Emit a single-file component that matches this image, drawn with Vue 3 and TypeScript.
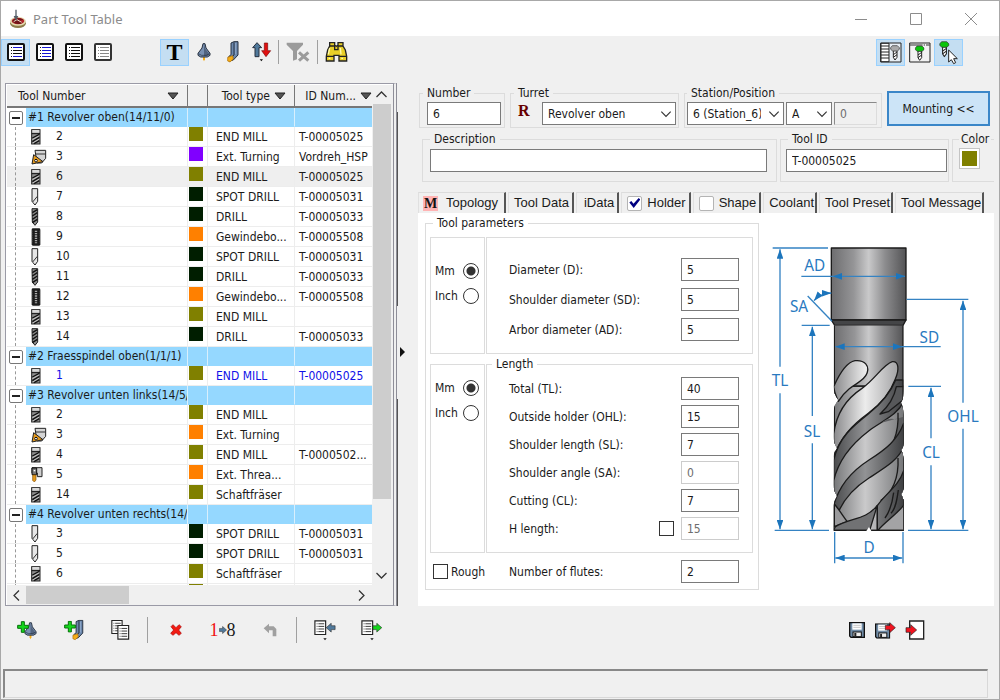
<script setup lang="ts">
import { computed, ref } from 'vue'

type IconId = 'endmill' | 'turning' | 'spot' | 'drill' | 'tap' | 'thread'

interface Tool {
  no: string
  icon: IconId
  color: string
  type: string
  id: string
  state?: 'selected' | 'current'
}

interface Group {
  label: string
  tools: Tool[]
}

const OLIVE = '#808000'
const DARK = '#001e00'
const ORANGE = '#ff8000'
const PURPLE = '#8000ff'

const groups = ref<Group[]>([
  {
    label: '#1 Revolver oben(14/11/0)',
    tools: [
      { no: '2', icon: 'endmill', color: OLIVE, type: 'END MILL', id: 'T-00005025' },
      { no: '3', icon: 'turning', color: PURPLE, type: 'Ext. Turning', id: 'Vordreh_HSP' },
      { no: '6', icon: 'endmill', color: OLIVE, type: 'END MILL', id: 'T-00005025', state: 'selected' },
      { no: '7', icon: 'spot', color: DARK, type: 'SPOT DRILL', id: 'T-00005031' },
      { no: '8', icon: 'drill', color: DARK, type: 'DRILL', id: 'T-00005033' },
      { no: '9', icon: 'tap', color: ORANGE, type: 'Gewindebo...', id: 'T-00005508' },
      { no: '10', icon: 'spot', color: DARK, type: 'SPOT DRILL', id: 'T-00005031' },
      { no: '11', icon: 'drill', color: DARK, type: 'DRILL', id: 'T-00005033' },
      { no: '12', icon: 'tap', color: ORANGE, type: 'Gewindebo...', id: 'T-00005508' },
      { no: '13', icon: 'endmill', color: OLIVE, type: 'END MILL', id: '' },
      { no: '14', icon: 'drill', color: DARK, type: 'DRILL', id: 'T-00005033' },
    ],
  },
  {
    label: '#2 Fraesspindel oben(1/1/1)',
    tools: [{ no: '1', icon: 'endmill', color: OLIVE, type: 'END MILL', id: 'T-00005025', state: 'current' }],
  },
  {
    label: '#3 Revolver unten links(14/5/',
    tools: [
      { no: '2', icon: 'endmill', color: OLIVE, type: 'END MILL', id: '' },
      { no: '3', icon: 'turning', color: ORANGE, type: 'Ext. Turning', id: '' },
      { no: '4', icon: 'endmill', color: OLIVE, type: 'END MILL', id: 'T-0000502...' },
      { no: '5', icon: 'thread', color: ORANGE, type: 'Ext. Threa...', id: '' },
      { no: '14', icon: 'endmill', color: OLIVE, type: 'Schaftfräser', id: '' },
    ],
  },
  {
    label: '#4 Revolver unten rechts(14/5',
    tools: [
      { no: '3', icon: 'spot', color: DARK, type: 'SPOT DRILL', id: 'T-00005031' },
      { no: '5', icon: 'spot', color: DARK, type: 'SPOT DRILL', id: 'T-00005031' },
      { no: '6', icon: 'endmill', color: OLIVE, type: 'Schaftfräser', id: '' },
      { no: '', icon: 'endmill', color: OLIVE, type: '', id: '' },
    ],
  },
])

const listViews = ['mixed', 'blue', 'black', 'gray'] as const
const activeView = ref<(typeof listViews)[number]>('mixed')

const form = ref({
  number: '6',
  turret: 'Revolver oben',
  station: '6 (Station_6)',
  position: 'A',
  offset: '0',
  description: '',
  toolId: 'T-00005025',
  color: OLIVE,
  holder: true,
  shape: false,
  diameterUnit: 'Mm',
  lengthUnit: 'Mm',
  rough: false,
  flutes: '2',
  hLength: false,
})

const diameters = ref([
  { key: 'd', label: 'Diameter (D):', value: '5' },
  { key: 'sd', label: 'Shoulder diameter (SD):', value: '5' },
  { key: 'ad', label: 'Arbor diameter (AD):', value: '5' },
])

const lengths = ref([
  { key: 'tl', label: 'Total (TL):', value: '40', disabled: false },
  { key: 'ohl', label: 'Outside holder (OHL):', value: '15', disabled: false },
  { key: 'sl', label: 'Shoulder length (SL):', value: '7', disabled: false },
  { key: 'sa', label: 'Shoulder angle (SA):', value: '0', disabled: true },
  { key: 'cl', label: 'Cutting (CL):', value: '7', disabled: false },
  { key: 'hl', label: 'H length:', value: '15', disabled: true },
])

const units = ['Mm', 'Inch']
const swatchStyle = computed(() => ({ backgroundColor: form.value.color }))
</script>

<template>
  <svg class="defs" aria-hidden="true">
    <symbol id="endmill" viewBox="0 0 30 48">
      <rect x="2" y="2" width="25" height="43" fill="#8f8f8f" stroke="#222" stroke-width="3" />
      <rect x="4" y="3" width="21" height="8" fill="#d8d8d8" />
      <path d="M2 14H27" stroke="#111" stroke-width="3" />
      <path d="M4 27L25 16M4 38L25 25M9 44L25 35" stroke="#111" stroke-width="4" />
      <path d="M4 32L25 20M5 42L25 30" stroke="#ddd" stroke-width="2" />
    </symbol>
    <symbol id="turning" viewBox="0 0 48 48">
      <path d="M12 4H44V28L32 42H18Z" fill="#d4d4d4" stroke="#222" stroke-width="3" />
      <path d="M14 15H44" stroke="#333" stroke-width="3" />
      <path d="M8 17L36 38L3 45Z" fill="#e59a1c" stroke="#222" stroke-width="3" />
      <circle cx="15" cy="35" r="4" fill="#fff" stroke="#111" stroke-width="3" />
    </symbol>
    <symbol id="spot" viewBox="0 0 30 54">
      <path d="M3 2H20V40L12 51L6 44L3 40Z" fill="#e6e6e6" stroke="#222" stroke-width="3" />
      <path d="M5 42L19 25" stroke="#333" stroke-width="3" />
    </symbol>
    <symbol id="drill" viewBox="0 0 30 54">
      <path d="M3 2H20V42L12 52L4 42Z" fill="#8c8c8c" stroke="#222" stroke-width="3" />
      <path d="M4 14L19 5M4 24L19 14M4 34L19 24M4 44L19 34" stroke="#111" stroke-width="4" />
    </symbol>
    <symbol id="tap" viewBox="0 0 30 54">
      <rect x="2" y="1" width="26" height="52" rx="4" fill="#1c1c1c" />
      <path d="M15 8V46" stroke="#aaa" stroke-width="7" stroke-dasharray="4 3" />
      <path d="M4 8V46M26 8V46" stroke="#666" stroke-width="2" stroke-dasharray="3 3" />
    </symbol>
    <symbol id="thread" viewBox="0 0 36 48">
      <path d="M3 2H33V29H19V18H3Z" fill="#cfcfcf" stroke="#222" stroke-width="3" />
      <path d="M3 3H17V23H3Z" fill="#777" stroke="#111" stroke-width="3" />
      <path d="M8 11H13" stroke="#fff" stroke-width="4" />
      <path d="M5 24H15V39L10 45L5 40Z" fill="#e59a1c" stroke="#84510a" stroke-width="2" />
    </symbol>
    <symbol id="cone" viewBox="0 0 42 60">
      <path d="M18 40H24V52L21 58L18 52Z" fill="#f5ad19" />
      <path d="M18 5L24 5L27 18L39 34V40L31 45H11L3 40V34L15 18Z" fill="#7890b2" stroke="#26303f" stroke-width="3" />
      <path d="M21 6V42L31 43L37 37L25 20Z" fill="#52647f" />
      <path d="M4 35L14 40H28L38 35" fill="none" stroke="#26303f" stroke-width="2" />
    </symbol>
    <symbol id="holder" viewBox="0 0 42 66">
      <path d="M15 6L24 2H36V42L22 57L9 60L8 47L15 41Z" fill="#6c88ad" stroke="#252f3e" stroke-width="3" />
      <path d="M24 4V42L17 48" fill="none" stroke="#252f3e" stroke-width="3" />
      <path d="M29 6V40" stroke="#8fa8c8" stroke-width="3" />
      <path d="M5 49L20 44L22 54L12 63L5 60Z" fill="#f5ad19" stroke="#ab6b00" stroke-width="2" />
    </symbol>
    <symbol id="plus" viewBox="0 0 36 36">
      <path d="M13 2H22V13H34V22H22V34H13V22H2V13H13Z" fill="#14d61d" stroke="#08700c" stroke-width="3" />
    </symbol>
    <symbol id="sheet" viewBox="0 0 48 54">
      <path d="M3 3H40V50H3Z" fill="#fff" stroke="#222" stroke-width="4" />
      <path d="M9 13H12M9 22H12M9 31H12M9 40H12M15 13H35M15 22H35M15 31H35M15 40H35" stroke="#222" stroke-width="3" />
    </symbol>
    <symbol id="screw" viewBox="0 0 30 48">
      <path d="M10 18H21V38L15 46L10 38Z" fill="#fff" stroke="#222" stroke-width="3" />
      <path d="M10 30L21 22M10 38L21 30" stroke="#222" stroke-width="3" />
      <path d="M7 3H22L28 9V14L22 19H8L2 14V9Z" fill="currentColor" stroke="#333" stroke-width="2" />
    </symbol>
    <symbol id="floppy" viewBox="0 0 48 48">
      <path d="M2 2H46V46H6L2 42Z" fill="#6f8ba6" stroke="#111" stroke-width="4" />
      <rect x="10" y="4" width="28" height="19" fill="#fff" />
      <path d="M13 10H35M13 16H35" stroke="#aaa" stroke-width="2" />
      <rect x="12" y="30" width="25" height="14" fill="#eee" stroke="#111" stroke-width="3" />
      <rect x="16" y="33" width="6" height="10" fill="#222" />
    </symbol>
    <symbol id="chevron" viewBox="0 0 12 12">
      <path d="M2 4L6 8L10 4" fill="none" stroke="currentColor" stroke-width="1" />
    </symbol>
    <symbol id="arrow-right" viewBox="0 0 36 36">
      <path d="M2 11H16V2L34 18L16 34V25H2Z" fill="currentColor" stroke="#222" stroke-width="2" />
    </symbol>
    <symbol id="sort" viewBox="0 0 12 8">
      <path d="M1 1H11L6 7Z" fill="#555" stroke="#222" />
    </symbol>
  </svg>

  <div class="window">
    <header class="titlebar">
      <svg class="app-icon" viewBox="30 24 54 60" aria-hidden="true">
        <ellipse cx="57" cy="67" rx="24" ry="14" fill="#8d7c4a" />
        <ellipse cx="57" cy="61" rx="24" ry="13" fill="#e5dcb0" />
        <ellipse cx="57" cy="60" rx="19" ry="10" fill="#b3262b" />
        <path d="M40 60C46 49 66 50 73 56L60 59L71 65C62 71 46 70 40 60" fill="#711518" />
        <path d="M44 62L54 56L68 64" fill="none" stroke="#eee0c8" stroke-width="3" />
        <path d="M49 26H53V44L58 46L51 59L44 46L49 44Z" fill="#555f68" />
      </svg>
      <h1>Part Tool Table</h1>
      <div class="caption">
        <button type="button" aria-label="Minimize"><svg viewBox="0 0 14 14"><path d="M1 7.500H13" /></svg></button>
        <button type="button" aria-label="Maximize"><svg viewBox="0 0 14 14"><path d="M1.500 1.500H12.500V12.500H1.500Z" /></svg></button>
        <button type="button" aria-label="Close"><svg viewBox="0 0 14 14"><path d="M1 1L13 13M13 1L1 13" /></svg></button>
      </div>
    </header>

    <nav class="toolbar" aria-label="View">
      <button
        v-for="view in listViews"
        :key="view"
        type="button"
        class="tool"
        :class="{ on: view === activeView }"
        :aria-label="`List ${view}`"
        @click="activeView = view"
      >
        <svg class="list-icon" :class="view" viewBox="0 0 18 18">
          <rect class="frame" x="1" y="1" width="16" height="16" rx="1" />
          <path class="dots" d="M4 4.500H5M4 7.500H5M4 10.500H5M4 13.500H5" />
          <path class="outer" d="M6 4.500H15M6 13.500H15" />
          <path class="inner" d="M6 7.500H15M6 10.500H15" />
        </svg>
      </button>
      <button type="button" class="tool on letter" aria-label="Text">T</button>
      <button type="button" class="tool" aria-label="Milling tools"><svg width="14" height="20"><use href="#cone" /></svg></button>
      <button type="button" class="tool" aria-label="Turning tools"><svg width="14" height="22"><use href="#holder" /></svg></button>
      <button type="button" class="tool" aria-label="Sort">
        <svg width="20" height="22" viewBox="756 126 60 66">
          <path d="M771 131L785 146H777V173H765V146H758Z" fill="#50799b" stroke="#26303f" stroke-width="3" />
          <path d="M793 132H803V155H812L798 173L785 155H793Z" fill="#e01010" stroke="#7c0b0b" stroke-width="2" />
          <path d="M779 181H789L784 187Z" fill="#111" />
        </svg>
      </button>
      <span class="rule short"></span>
      <button type="button" class="tool wide" aria-label="Clear filter">
        <svg width="24" height="22" viewBox="861 126 72 66">
          <path d="M863 131H912V137L894 156V181L882 185V156L863 137Z" fill="#9b9b9b" />
          <path d="M900 160L928 185M928 160L900 185" stroke="#9b9b9b" stroke-width="9" />
        </svg>
      </button>
      <span class="rule short"></span>
      <button type="button" class="tool wide" aria-label="Find">
        <svg width="23" height="22" viewBox="973 124 69 66">
          <path d="M987 129H1002V137L1007 140L1012 137V129H1027V139L1034 151L1038 170V184H1015V167H1000V184H977V170L981 151L987 139Z" fill="#e8cf28" stroke="#222" stroke-width="4" />
          <path d="M987 139H1002V152M1027 139H1012V152M977 170H1000M1015 170H1038M1001 150H1013" fill="none" stroke="#222" stroke-width="4" />
          <path d="M987 145L983 164M1019 145L1021 164M984 176H989M1022 176H1027" stroke="#fffbb0" stroke-width="4" />
        </svg>
      </button>
      <div class="toolbar-end">
        <button type="button" class="tool on" aria-label="Table and tool">
          <svg class="gray-head" width="22" height="21" viewBox="0 0 66 63">
            <path d="M2 3H63V60H2Z" fill="#e7eef4" stroke="#222" stroke-width="3" />
            <path d="M3 4H27V59H3Z" fill="#fff" stroke="#222" stroke-width="3" />
            <path d="M3 12H27M3 21H27M3 30H27M3 39H27M3 48H27" stroke="#222" stroke-width="3" />
            <use href="#screw" x="30" y="8" width="30" height="48" />
          </svg>
        </button>
        <button type="button" class="tool" aria-label="Tool view">
          <svg class="green-head" width="22" height="21" viewBox="0 0 66 63">
            <path d="M2 3H63V60H2Z" fill="#f2f2f2" stroke="#222" stroke-width="3" />
            <path d="M3 9H62" stroke="#333" stroke-width="3" stroke-dasharray="38 3 4 3" />
            <use href="#screw" x="17" y="9" width="30" height="48" />
          </svg>
        </button>
        <button type="button" class="tool on" aria-label="Pick tool">
          <svg class="green-head" width="20" height="25" viewBox="355 118 60 75">
            <use href="#screw" x="355" y="120" width="32" height="50" />
            <path d="M384 148V184L392 177L399 189L405 186L399 174H410Z" fill="#fff" stroke="#222" stroke-width="3" />
          </svg>
        </button>
      </div>
    </nav>

    <main class="workspace">
      <section class="list-panel" aria-label="Tools">
        <div class="list-body">
          <div class="table-view">
            <table>
              <colgroup>
                <col class="c-number" />
                <col class="c-color" />
                <col class="c-type" />
                <col class="c-id" />
              </colgroup>
              <thead>
                <tr>
                  <th><span class="th first">Tool Number<svg width="12" height="8"><use href="#sort" /></svg></span></th>
                  <th></th>
                  <th><span class="th">Tool type<svg width="12" height="8"><use href="#sort" /></svg></span></th>
                  <th><span class="th">ID Num...<svg width="12" height="8"><use href="#sort" /></svg></span></th>
                </tr>
              </thead>
              <tbody v-for="group in groups" :key="group.label">
                <tr class="group">
                  <td>
                    <div class="group-cell">
                      <button type="button" class="expander" aria-label="Collapse"></button>
                      <span>{{ group.label }}</span>
                    </div>
                  </td>
                  <td></td>
                  <td></td>
                  <td></td>
                </tr>
                <tr v-for="(tool, i) in group.tools" :key="i" :class="tool.state">
                  <td>
                    <div class="number-cell">
                      <svg width="16" height="18">
                        <use v-if="tool.icon === 'turning'" href="#turning" x="0" y="1" width="16" height="16" />
                        <use v-else-if="tool.icon === 'thread'" href="#thread" x="0" y="1" width="12" height="16" />
                        <use v-else-if="tool.icon === 'endmill'" href="#endmill" x="0" y="1" width="10" height="16" />
                        <use v-else :href="`#${tool.icon}`" x="0" y="0" width="10" height="18" />
                      </svg>
                      <span>{{ tool.no }}</span>
                    </div>
                  </td>
                  <td><span class="swatch" :style="{ backgroundColor: tool.color }"></span></td>
                  <td class="text">{{ tool.type }}</td>
                  <td class="text id">{{ tool.id }}</td>
                </tr>
              </tbody>
            </table>
          </div>
          <div class="vscroll">
            <button type="button" class="up" aria-label="Scroll up"><svg viewBox="0 0 12 12"><use href="#chevron" /></svg></button>
            <div class="vthumb"></div>
            <button type="button" class="down" aria-label="Scroll down"><svg viewBox="0 0 12 12"><use href="#chevron" /></svg></button>
          </div>
        </div>
        <div class="hscroll">
          <button type="button" class="left" aria-label="Scroll left"><svg viewBox="0 0 12 12"><use href="#chevron" /></svg></button>
          <div class="hthumb"></div>
          <button type="button" class="right" aria-label="Scroll right"><svg viewBox="0 0 12 12"><use href="#chevron" /></svg></button>
        </div>
      </section>

      <div class="splitter">
        <span></span>
        <button type="button" aria-label="Collapse list"></button>
        <span></span>
      </div>

      <section class="detail">
        <div class="head-row">
          <fieldset class="box number">
            <legend>Number</legend>
            <input v-model="form.number" type="text" aria-label="Number" />
          </fieldset>
          <fieldset class="box turret">
            <legend>Turret</legend>
            <div class="line">
              <b class="r-mark">R</b>
              <span class="combo">
                <select v-model="form.turret" aria-label="Turret"><option>Revolver oben</option></select>
                <svg viewBox="0 0 12 12"><use href="#chevron" /></svg>
              </span>
            </div>
          </fieldset>
          <fieldset class="box station">
            <legend>Station/Position</legend>
            <div class="line tight">
              <span class="combo">
                <select v-model="form.station" aria-label="Station"><option>6 (Station_6)</option></select>
                <svg viewBox="0 0 12 12"><use href="#chevron" /></svg>
              </span>
              <span class="combo small">
                <select v-model="form.position" aria-label="Position"><option>A</option></select>
                <svg viewBox="0 0 12 12"><use href="#chevron" /></svg>
              </span>
              <input v-model="form.offset" class="sunken" type="text" disabled aria-label="Offset" />
            </div>
          </fieldset>
          <button type="button" class="mounting">Mounting &lt;&lt;</button>
        </div>

        <div class="desc-row">
          <fieldset class="box description">
            <legend>Description</legend>
            <input v-model="form.description" type="text" aria-label="Description" />
          </fieldset>
          <fieldset class="box tool-id">
            <legend>Tool ID</legend>
            <input v-model="form.toolId" type="text" aria-label="Tool ID" />
          </fieldset>
          <fieldset class="box color">
            <legend>Color</legend>
            <button type="button" class="color-pick" :style="swatchStyle" aria-label="Color"></button>
          </fieldset>
        </div>

        <div class="tabs">
          <div class="tab front"><b class="m-mark">M</b><button type="button">Topology</button></div>
          <div class="tab"><button type="button">Tool Data</button></div>
          <div class="tab roomy"><button type="button">iData</button></div>
          <div class="tab check">
            <input v-model="form.holder" type="checkbox" class="tab-check" aria-label="Use holder" /><button type="button">Holder</button>
          </div>
          <div class="tab check">
            <input v-model="form.shape" type="checkbox" class="tab-check" aria-label="Use shape" /><button type="button">Shape</button>
          </div>
          <div class="tab"><button type="button">Coolant</button></div>
          <div class="tab"><button type="button">Tool Preset</button></div>
          <div class="tab"><button type="button">Tool Message</button></div>
        </div>

        <div class="pane">
          <fieldset class="params">
            <legend>Tool parameters</legend>
            <div class="split">
              <div class="units">
                <label v-for="unit in units" :key="unit">
                  {{ unit }}<input v-model="form.diameterUnit" type="radio" name="diameter-unit" :value="unit" />
                </label>
              </div>
              <div class="fields diameters">
                <label v-for="item in diameters" :key="item.key" class="field">
                  <span>{{ item.label }}</span><input v-model="item.value" type="text" />
                </label>
              </div>
            </div>
            <div class="split with-legend">
              <div class="units">
                <label v-for="unit in units" :key="unit">
                  {{ unit }}<input v-model="form.lengthUnit" type="radio" name="length-unit" :value="unit" />
                </label>
              </div>
              <fieldset class="fields lengths">
                <legend>Length</legend>
                <div class="stack">
                  <div v-for="item in lengths" :key="item.key" class="field">
                    <label :for="item.key">{{ item.label }}</label>
                    <input v-if="item.key === 'hl'" v-model="form.hLength" type="checkbox" aria-label="Use H length" />
                    <input :id="item.key" v-model="item.value" type="text" :disabled="item.disabled" />
                  </div>
                </div>
              </fieldset>
            </div>
            <div class="last-row">
              <label class="rough"><input v-model="form.rough" type="checkbox" />Rough</label>
              <label class="field flutes"><span>Number of flutes:</span><input v-model="form.flutes" type="text" /></label>
            </div>
          </fieldset>

          <svg class="diagram" viewBox="0 0 675 1050" role="img" aria-label="End mill dimensions">
            <defs>
              <linearGradient id="steel" x1="0" x2="1" y1="0" y2="0">
                <stop offset="0" stop-color="#6d6d6f" />
                <stop offset="0.3" stop-color="#959597" />
                <stop offset="0.5" stop-color="#c9c9ca" />
                <stop offset="0.72" stop-color="#8c8c8e" />
                <stop offset="1" stop-color="#535355" />
              </linearGradient>
              <linearGradient id="land" x1="208" x2="414" y1="0" y2="0" gradientUnits="userSpaceOnUse">
                <stop offset="0" stop-color="#77787a" />
                <stop offset="0.45" stop-color="#cacacb" />
                <stop offset="1" stop-color="#77787a" />
              </linearGradient>
              <linearGradient id="bright" x1="208" x2="414" y1="0" y2="0" gradientUnits="userSpaceOnUse">
                <stop offset="0" stop-color="#8b8b8d" />
                <stop offset="0.45" stop-color="#ececec" />
                <stop offset="1" stop-color="#98989a" />
              </linearGradient>
              <linearGradient id="groove" x1="208" x2="414" y1="0" y2="0" gradientUnits="userSpaceOnUse">
                <stop offset="0" stop-color="#4b4c4e" />
                <stop offset="0.45" stop-color="#929395" />
                <stop offset="1" stop-color="#3f4042" />
              </linearGradient>
              <clipPath id="silhouette">
                <path d="M206 286H416V470C416 490 416 505 408 518C416 535 416 550 416 570V640C416 650 412 656 408 660C416 672 416 690 416 700V770C416 780 412 788 408 792C412 800 416 808 416 815V903H206V830C206 815 212 808 216 798C208 786 206 775 206 765V680C206 668 212 662 216 655C208 642 206 630 206 620V545C206 530 212 520 220 510C210 498 206 485 206 470Z" />
              </clipPath>
              <marker id="tip" viewBox="0 0 28 20" markerWidth="28" markerHeight="20" refX="28" refY="10" orient="auto-start-reverse" markerUnits="userSpaceOnUse">
                <path d="M0 0L28 10L0 20Z" fill="#1c75bc" />
              </marker>
            </defs>
            <g stroke="#1b1b1b" stroke-width="4" stroke-linejoin="round">
              <path d="M199 54H423V270H199Z" fill="url(#steel)" />
              <path d="M199 270H423L414 286H209Z" fill="#444547" />
              <g clip-path="url(#silhouette)">
                <path d="M208 286H414V901H208Z" fill="url(#steel)" />
                <path d="M208 468H414V901H208Z" fill="url(#land)" />
                <path d="M206 286H416V468H206Z" fill="url(#steel)" stroke="none" />
                <path d="M208 286V470M414 286V470M262 468H320" fill="none" />
                <path d="M206 470C222 434 244 397 270 392C300 389 314 408 306 430C299 451 276 458 252 477C233 493 226 504 220 514C214 500 208 490 206 470Z" fill="url(#bright)" />
                <path d="M206 612C214 548 246 505 290 476C330 448 354 404 382 395C402 393 403 420 391 447C377 485 350 520 310 550C262 585 226 622 206 680Z" fill="url(#bright)" />
                <path d="M206 690C222 622 262 590 310 552C350 520 376 490 392 450H414V900H206Z" fill="url(#groove)" />
                <path d="M345 552C370 530 388 500 394 470H414V510L370 545Z" fill="#57585a" />
                <path d="M206 752C220 690 262 640 312 602C356 570 396 556 416 515V901H206Z" fill="url(#land)" />
                <path d="M350 578C380 552 394 580 399 560C400 620 376 668 330 694L390 668L416 590V560Z" fill="#5c5d5f" stroke="none" />
                <path d="M399 548C402 610 382 660 345 682" fill="none" />
                <path d="M206 826C222 768 262 722 312 690C362 658 398 630 416 580V901H206Z" fill="url(#groove)" />
                <path d="M206 890C220 820 262 776 312 744C362 712 400 690 416 650V901H206Z" fill="url(#land)" />
                <path d="M399 684C402 744 382 790 347 812" fill="none" />
                <path d="M337 827C362 790 400 770 416 722V901H337Z" fill="url(#groove)" />
                <path d="M360 864C376 842 382 820 386 788M378 850C392 836 396 810 400 780" fill="none" />
                <path d="M337 827V901H339C355 880 395 853 416 826V901H337Z" fill="#a3a3a5" />
                <path d="M208 822C228 846 236 862 247 875L208 890Z" fill="#9a9a9c" />
                <path d="M206 901L211 890C255 862 301 872 337 826L314 901Z" fill="#717274" />
              </g>
              <path d="M208 901H414" />
              <path d="M304 903L312 891L319 903" fill="#fff" stroke="none" />
            </g>
            <g fill="none" stroke="#3583c3" stroke-width="4">
              <path d="M23 54H189M29 901H192M110 286H194M425 208H610M430 469H528M429 901H610M209 906V1000M414 906V1000" />
              <path d="M45 410V58" marker-end="url(#tip)" />
              <path d="M45 490V898" marker-end="url(#tip)" />
              <path d="M142 558V290" marker-end="url(#tip)" />
              <path d="M142 640V898" marker-end="url(#tip)" />
              <path d="M594 518V212" marker-end="url(#tip)" />
              <path d="M594 596V898" marker-end="url(#tip)" />
              <path d="M498 625V473" marker-end="url(#tip)" />
              <path d="M498 706V898" marker-end="url(#tip)" />
              <path d="M203 139H420" marker-start="url(#tip)" marker-end="url(#tip)" />
              <path d="M109 139H205M408 350H527" />
              <path d="M211 350H412" marker-start="url(#tip)" marker-end="url(#tip)" />
              <path d="M211 984H412" marker-start="url(#tip)" marker-end="url(#tip)" />
              <path d="M128 198L201 274" />
              <path d="M147 212Q166 190 199 189" marker-start="url(#tip)" marker-end="url(#tip)" />
            </g>
            <g class="dims">
              <text x="149" y="123">AD</text>
              <text x="102" y="245">SA</text>
              <text x="493" y="339">SD</text>
              <text x="45" y="468">TL</text>
              <text x="141" y="620">SL</text>
              <text x="594" y="575">OHL</text>
              <text x="498" y="685">CL</text>
              <text x="312" y="970">D</text>
            </g>
          </svg>
        </div>
      </section>
    </main>

    <footer>
      <nav class="actions" aria-label="Actions">
        <button type="button" class="act" aria-label="Add milling tool">
          <svg width="20" height="20" viewBox="0 0 60 60"><use href="#cone" x="21" y="3" width="39" height="57" /><use href="#plus" x="0" y="3" width="36" height="36" /></svg>
        </button>
        <button type="button" class="act" aria-label="Add turning tool">
          <svg width="20" height="22" viewBox="0 0 60 66"><use href="#holder" x="22" y="2" width="40" height="63" /><use href="#plus" x="0" y="5" width="36" height="36" /></svg>
        </button>
        <button type="button" class="act" aria-label="Copy">
          <svg width="20" height="22" viewBox="0 0 60 66"><use href="#sheet" x="0" y="2" width="40" height="45" /><use href="#sheet" x="18" y="17" width="42" height="47" /></svg>
        </button>
        <span class="rule tall"></span>
        <button type="button" class="act" aria-label="Delete">
          <svg width="12" height="12" viewBox="0 0 36 36"><path d="M3 8L9 2L18 11L27 2L34 8L26 18L34 28L27 34L18 26L9 34L2 28L11 18Z" fill="#f21b12" stroke="#a70000" stroke-width="2" /></svg>
        </button>
        <button type="button" class="act renumber" aria-label="Renumber">
          <i class="one">1</i><svg class="blue-arrow" width="8" height="8"><use href="#arrow-right" width="8" height="8" /></svg><i>8</i>
        </button>
        <button type="button" class="act" aria-label="Undo">
          <svg width="14" height="14" viewBox="0 0 42 42"><path d="M2 16L18 2V10H32L40 18V40H29V22H18V31Z" fill="#a0a0a0" /></svg>
        </button>
        <span class="rule tall"></span>
        <button type="button" class="act blue-arrow" aria-label="Import">
          <svg width="22" height="22" viewBox="0 0 66 66"><use href="#sheet" x="0" y="3" width="42" height="47" /><g transform="matrix(-1 0 0 1 66 11)"><use href="#arrow-right" width="32" height="30" /></g><path d="M28 58H38L33 64Z" fill="#111" /></svg>
        </button>
        <button type="button" class="act green-arrow" aria-label="Export">
          <svg width="22" height="22" viewBox="0 0 66 66"><use href="#sheet" x="0" y="3" width="42" height="47" /><use href="#arrow-right" x="33" y="11" width="32" height="30" /><path d="M28 58H38L33 64Z" fill="#111" /></svg>
        </button>
        <div class="actions-end">
          <button type="button" class="tool" aria-label="Save"><svg width="16" height="16"><use href="#floppy" /></svg></button>
          <button type="button" class="tool red-arrow" aria-label="Save and exit">
            <svg width="22" height="20" viewBox="0 0 66 60"><use href="#floppy" x="0" y="10" width="46" height="46" /><use href="#arrow-right" x="28" y="6" width="36" height="34" /></svg>
          </button>
          <button type="button" class="tool red-arrow" aria-label="Exit">
            <svg width="20" height="20" viewBox="0 0 60 60"><path d="M14 3H56V57H14Z" fill="#fff" stroke="#222" stroke-width="4" /><use href="#arrow-right" x="0" y="12" width="38" height="36" /></svg>
          </button>
        </div>
      </nav>
      <div class="status" role="status"></div>
    </footer>
  </div>
</template>

<style>
body {
  margin: 0;
}
</style>

<style scoped>
* {
  box-sizing: border-box;
}
.defs {
  display: none;
}
.window {
  display: flex;
  flex-direction: column;
  height: 100vh;
  border: 1px solid #a8a8a8;
  background: #f0f0f0;
  color: #1a1a1a;
  font-family: 'DejaVu Sans Condensed', 'Noto Sans', sans-serif;
  font-size: 12px;
  line-height: 16px;
}
button,
input,
select {
  margin: 0;
  font: inherit;
  color: inherit;
}
button {
  padding: 0;
  border: 0;
  background: none;
}
svg {
  flex: none;
}
.titlebar {
  display: flex;
  align-items: center;
  height: 35px;
  padding-left: 8px;
  background: #fff;
}
.app-icon {
  width: 18px;
  height: 20px;
}
h1 {
  flex: 1;
  margin: 0 0 0 6px;
  color: #8c8c8c;
  font: 13px/20px 'Noto Sans', sans-serif;
}
.caption {
  display: flex;
  padding-right: 1px;
}
.caption button {
  display: grid;
  place-items: center;
  width: 55px;
  height: 35px;
}
.caption svg {
  width: 14px;
  height: 14px;
  fill: none;
  stroke: #8c8c8c;
}
.toolbar {
  display: flex;
  align-items: center;
  height: 47px;
  padding-bottom: 15px;
}
.toolbar-end {
  display: flex;
  margin-left: auto;
  padding-right: 36px;
}
.tool {
  display: grid;
  place-items: center;
  width: 29px;
  height: 27px;
  border: 1px solid transparent;
}
.tool.on {
  border-color: #99d1ff;
  background: #c4def2;
}
.tool.wide {
  width: 35px;
}
.tool.letter {
  margin-left: 43px;
  color: #000;
  font: bold 24px/24px 'Liberation Serif', serif;
}
.list-icon {
  width: 18px;
  height: 18px;
  fill: none;
  stroke: #111;
}
.list-icon .frame {
  fill: #fff;
  stroke-width: 2;
}
.mixed .outer,
.blue .outer,
.blue .inner {
  stroke: #1414d2;
}
.gray .frame {
  stroke: #333;
}
.gray .outer,
.gray .inner,
.gray .dots {
  stroke: #888;
}
.rule {
  width: 1px;
  background: #a0a0a0;
}
.rule.short {
  height: 24px;
  margin: 0 1px 0 2px;
}
.gray-head {
  color: #a9a9a9;
}
.green-head {
  color: #0ac50a;
}
.workspace {
  display: flex;
  flex: 1;
  min-height: 0;
}
.list-panel {
  display: flex;
  flex: 0 0 392px;
  flex-direction: column;
  margin-left: 4px;
  border: 1px solid #9a9aa6;
  border-right: 4px double #8e8e98;
  box-shadow: inset 1px 1px #fff;
}
.list-body {
  display: flex;
  flex: 1;
  min-height: 0;
  padding: 1px 2px 0 1px;
}
.table-view {
  flex: 1;
  min-width: 0;
  overflow: hidden;
  background: #fff;
}
table {
  width: 100%;
  border-collapse: separate;
  border-spacing: 0;
  table-layout: fixed;
}
.c-number {
  width: 181px;
}
.c-color {
  width: 20px;
}
.c-type {
  width: 87px;
}
th {
  height: 23px;
  padding: 1px 0 0;
  border-right: 1px solid #777;
  border-bottom: 2px solid #777;
  background: #f0f0f0;
  font-weight: normal;
}
th:last-child {
  border-right: 0;
}
.th {
  display: flex;
  align-items: center;
  justify-content: flex-end;
  gap: 4px;
  padding-right: 8px;
  white-space: nowrap;
}
th:last-child .th {
  padding-right: 0;
}
.th.first {
  justify-content: space-between;
  padding: 0 8px 0 11px;
}
td {
  height: 20px;
  padding: 0;
  overflow: hidden;
  border-right: 1px solid #ededed;
  border-bottom: 1px solid #ededed;
  white-space: nowrap;
}
td:last-child {
  border-right: 0;
}
.group td {
  height: 19px;
  border-color: #d9effc;
  border-bottom-color: #95d8ff;
  background: #95d8ff;
}
.group-cell {
  display: flex;
  align-items: center;
  height: 18px;
}
.group-cell span {
  margin: 0 0 2px 2px;
}
.group td:first-child {
  background: linear-gradient(90deg, #fff 19px, #95d8ff 19px);
  border-bottom: 0;
}
.expander {
  display: grid;
  flex: none;
  place-items: center;
  width: 14px;
  height: 14px;
  margin: 0 3px 0 2px;
  border: 1px solid #777;
  border-radius: 2px;
  background: #fff;
}
.expander::before {
  content: '';
  width: 8px;
  height: 2px;
  background: #222;
}
.number-cell {
  display: flex;
  align-items: center;
  height: 19px;
  margin-left: 8px;
  padding-left: 15px;
  border-left: 1px dashed #999;
}
.number-cell span {
  margin: 0 0 2px 9px;
}
.swatch {
  display: block;
  width: 14px;
  height: 14px;
  margin: 0 0 5px 1px;
}
.text {
  padding: 1px 0 0 8px;
}
.text.id {
  padding-left: 4px;
}
.selected td {
  background: #efefef;
}
.current {
  color: #1010e8;
}
.vscroll {
  display: flex;
  flex: 0 0 19px;
  flex-direction: column;
  align-items: center;
}
.vscroll button,
.hscroll button {
  display: grid;
  flex: none;
  place-items: center;
  width: 19px;
  height: 19px;
}
.vscroll svg,
.hscroll svg {
  width: 15px;
  height: 15px;
  color: #333;
}
.up svg {
  transform: rotate(180deg);
}
.left svg {
  transform: rotate(90deg);
}
.right svg {
  transform: rotate(-90deg);
}
.vthumb {
  width: 18px;
  height: 79%;
  margin-bottom: auto;
  background: #cdcdcd;
}
.hscroll {
  display: flex;
  flex: 0 0 20px;
  align-items: center;
  padding: 0 22px 0 1px;
}
.hthumb {
  width: 103px;
  height: 18px;
  margin-right: auto;
  background: #cdcdcd;
}
.splitter {
  display: flex;
  flex: 0 0 21px;
  flex-direction: column;
}
.splitter span {
  flex: 1;
  width: 1px;
  background: #555;
}
.splitter span:first-child {
  flex: 0 1 194px;
  margin-top: 29px;
}
.splitter button {
  width: 0;
  height: 10px;
  margin: 41px 0 42px 3px;
  border: 5px solid transparent;
  border-right: 0;
  border-left-color: #111;
}
.detail {
  display: flex;
  flex: 1;
  flex-direction: column;
  min-width: 0;
  margin-right: 5px;
  padding-top: 2px;
}
fieldset {
  min-width: 0;
  margin: 0;
  padding: 0;
  border: 1px solid #dcdcdc;
}
legend {
  height: 16px;
  padding: 0 4px;
}
input[type='text'],
select {
  width: 100%;
  height: 23px;
  padding: 0 5px;
  border: 1px solid #7a7a7a;
  border-radius: 0;
  outline: 0;
  background: #fff;
}
input[type='text']:disabled {
  border-color: #cccccc;
  color: #6d6d6d;
}
select {
  grid-area: 1 / 1;
  padding: 0 22px 0 5px;
  appearance: none;
}
.combo {
  display: grid;
  flex: 1;
  align-items: center;
  min-width: 0;
}
.combo svg {
  grid-area: 1 / 1;
  justify-self: end;
  width: 14px;
  height: 14px;
  margin-right: 3px;
  color: #333;
  pointer-events: none;
}
.combo.small {
  flex: 0 0 46px;
}
.head-row {
  display: flex;
  gap: 5px;
  padding: 0 4px 0 1px;
}
.box.number {
  flex: 0 0 86px;
  padding: 1px 3px 2px 7px;
}
.box.number legend {
  margin-left: -4px;
}
.box.turret {
  flex: 1;
  padding: 1px 2px;
}
.box.turret legend {
  margin-left: 1px;
}
.box.station {
  flex: 0 0 198px;
  padding: 1px 4px 2px 2px;
}
.line {
  display: flex;
}
.line.tight {
  gap: 2px;
}
.line input.sunken {
  flex: 0 0 43px;
  border-color: #8a8a8a #dcdcdc #dcdcdc #8a8a8a;
  background: #f0f0f0;
}
.r-mark {
  width: 29px;
  padding-left: 5px;
  color: #660000;
  font: bold 16px/18px 'Liberation Serif', serif;
}
.mounting {
  flex: 0 0 103px;
  height: 35px;
  margin-top: 6px;
  border: 2px solid #3a86c8;
  background: #cce4f7;
}
.desc-row {
  display: flex;
  gap: 3px;
  margin-top: 3px;
  padding-left: 4px;
}
.box.description {
  flex: 1;
  padding: 2px 9px 9px 7px;
}
.box.tool-id {
  flex: 0 0 169px;
  padding: 2px 1px 9px 5px;
}
.box.tool-id legend {
  margin-left: 2px;
}
.box.color {
  flex: 0 0 42px;
  padding: 1px 0 9px 6px;
  border-right: 0;
}
.box.color legend {
  padding: 0 2px;
}
.color-pick {
  display: block;
  width: 21px;
  height: 21px;
  border: 1px solid #c4c4c4;
  box-shadow: inset 0 0 0 2px #fff;
}
.tabs {
  display: flex;
  gap: 2px;
  height: 21px;
  margin-top: 10px;
  font: 13px/20px 'Liberation Sans', sans-serif;
}
.tab {
  display: flex;
  align-items: center;
  padding: 0 3px 0 5px;
  border-top: 1px solid #dcdcdc;
  border-right: 2px solid #555;
  border-left: 1px solid #e0e0e0;
  white-space: nowrap;
}
.tab:nth-child(n + 6) {
  padding: 0 1px 0 5px;
}
.tab.front {
  padding: 0 6px 0 4px;
}
.tab.roomy {
  padding-left: 7px;
}
.m-mark {
  width: 15px;
  height: 15px;
  margin-right: 8px;
  background: #ffb3b3;
  color: #111;
  font: bold 14px/15px 'Liberation Serif', serif;
  text-align: center;
}
.tab-check {
  display: grid;
  place-items: center;
  width: 15px;
  height: 15px;
  margin-right: 5px;
  border: 1px solid #b4b4b4;
  border-radius: 2px;
  background: #fff;
  appearance: none;
}
.tab-check:checked::before {
  content: '';
  width: 11px;
  height: 10px;
  background: #000080;
  clip-path: polygon(0 45%, 18% 30%, 38% 58%, 85% 0, 100% 14%, 40% 100%);
}
.pane {
  display: flex;
  flex: 1;
  align-items: flex-start;
  min-height: 0;
  padding: 2px 0 0 7px;
  background: #fff;
}
.params {
  flex: 0 0 334px;
  padding: 6px 5px 6px 4px;
}
.params > legend {
  margin-left: 3px;
}
.split {
  display: flex;
  gap: 1px;
}
.split.with-legend {
  margin-top: 2px;
}
.units {
  display: flex;
  flex: 0 0 55px;
  flex-direction: column;
  gap: 9px;
  padding: 25px 5px 0 4px;
  border: 1px solid #dcdcdc;
}
.with-legend .units {
  margin-top: 8px;
  padding-top: 15px;
}
.units label {
  display: flex;
  align-items: center;
  justify-content: space-between;
}
.units input {
  flex: none;
  width: 16px;
  height: 16px;
  border: 1px solid #333;
  border-radius: 50%;
  appearance: none;
}
.units input:checked {
  background: radial-gradient(circle, #333 4px, #fff 5px);
}
.fields {
  display: flex;
  flex: 1;
  flex-direction: column;
  border: 1px solid #dcdcdc;
}
.diameters {
  gap: 7px;
  padding: 20px 13px 12px 22px;
}
.lengths {
  display: block;
  padding: 5px 13px 12px 22px;
}
.lengths legend {
  margin-left: -17px;
}
.stack {
  display: flex;
  flex-direction: column;
  gap: 5px;
}
.field {
  display: flex;
  align-items: center;
  gap: 7px;
}
.field > :first-child {
  flex: 1;
}
.field input[type='text'] {
  flex: 0 0 58px;
}
input[type='checkbox']:not(.tab-check) {
  flex: none;
  width: 15px;
  height: 15px;
  border: 1px solid #333;
  background: #fff;
  appearance: none;
}
.last-row {
  display: flex;
  align-items: center;
  margin-top: 7px;
}
.rough {
  display: flex;
  flex: 0 0 79px;
  align-items: center;
  gap: 3px;
  padding-left: 3px;
}
.flutes {
  flex: 1;
  padding-right: 14px;
}
.diagram {
  width: 225px;
  height: 350px;
  margin: 15px 0 0 6px;
}
.dims {
  fill: #2a7abf;
  font: 46px 'Noto Sans', sans-serif;
  text-anchor: middle;
}
.actions {
  display: flex;
  align-items: center;
  height: 48px;
  padding-left: 2px;
}
.act {
  display: grid;
  place-items: center;
  width: 47px;
  height: 30px;
}
.rule.tall {
  height: 26px;
  margin: 0 4px 0 3px;
}
.renumber {
  display: flex;
  align-items: center;
  justify-content: center;
  font: 18px/20px 'Liberation Serif', serif;
}
.renumber i {
  font-style: normal;
}
.renumber .one {
  color: #f01010;
}
.blue-arrow {
  color: #50799b;
}
.green-arrow {
  color: #14d61d;
}
.red-arrow {
  color: #f01420;
}
.actions-end {
  display: flex;
  margin-left: auto;
  padding-right: 70px;
}
.status {
  height: 29px;
  margin: 15px 11px 1px 2px;
  border: 1px solid #d8d8d8;
  border-top: 2px solid #888;
  border-left: 2px solid #888;
}
</style>
